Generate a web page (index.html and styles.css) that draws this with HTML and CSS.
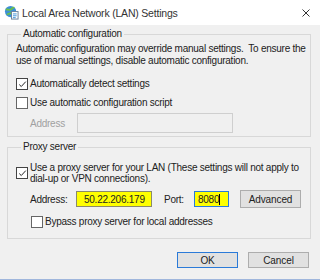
FILE: index.html
```html
<!DOCTYPE html>
<html lang="en">
<head>
    <meta charset="UTF-8">
    <title>Local Area Network (LAN) Settings</title>
    <link rel="stylesheet" href="styles.css">
</head>
<body>
    <div class="dialog">
        <div class="titlebar">
            <svg class="app-icon" viewBox="0 0 16 16" width="15" height="15">
                <circle cx="7" cy="7" r="6" fill="#3c8fd6"/>
                <path d="M2 5c2-1 3 1 5 0s2-3 4-2M3 10c2 0 3-2 5-1s2 2 4 1" stroke="#6cc04a" stroke-width="2" fill="none"/>
                <rect x="8" y="7" width="7" height="8" fill="#fff" stroke="#6a7f99" stroke-width="1"/>
                <path d="M9.5 9.5h4M9.5 11.5h4M9.5 13.5h3" stroke="#3c8fd6" stroke-width="1"/>
            </svg>
            <span class="title">Local Area Network (LAN) Settings</span>
            <svg class="close" viewBox="0 0 8 8" width="8" height="8">
                <path d="M0.5 0.5l7 7M7.5 0.5l-7 7" stroke="#333" stroke-width="1"/>
            </svg>
        </div>

        <div class="content">
            <fieldset class="group">
                <legend>Automatic configuration</legend>
                <p class="desc">Automatic configuration may override manual settings.&nbsp; To ensure the<br>use of manual settings, disable automatic configuration.</p>
                <label class="check first">
                    <span class="box checked">
                        <svg viewBox="0 0 11 11" width="9" height="9"><path d="M1.5 5.5l2.5 2.5 5.5-6" stroke="#222" stroke-width="1.2" fill="none"/></svg>
                    </span>
                    Automatically detect settings
                </label>
                <label class="check second">
                    <span class="box"></span>
                    Use automatic configuration script
                </label>
                <div class="field-row disabled">
                    <span class="field-label">Address</span>
                    <span class="input script-address"></span>
                </div>
            </fieldset>

            <fieldset class="group proxy">
                <legend>Proxy server</legend>
                <label class="check multi">
                    <span class="box checked">
                        <svg viewBox="0 0 11 11" width="9" height="9"><path d="M1.5 5.5l2.5 2.5 5.5-6" stroke="#222" stroke-width="1.2" fill="none"/></svg>
                    </span>
                    <span class="multi-text">Use a proxy server for your LAN (These settings will not apply to<br>dial-up or VPN connections).</span>
                </label>
                <div class="field-row proxy-row">
                    <span class="field-label">Address:</span>
                    <span class="input highlight proxy-address">50.22.206.179</span>
                    <span class="port-label">Port:</span>
                    <span class="input highlight focused port">8080<span class="caret"></span></span>
                    <button class="btn advanced">Advanced</button>
                </div>
                <label class="check bypass">
                    <span class="box"></span>
                    Bypass proxy server for local addresses
                </label>
            </fieldset>

            <div class="actions">
                <button class="btn default">OK</button>
                <button class="btn">Cancel</button>
            </div>
        </div>
    </div>
</body>
</html>
```

FILE: styles.css
```css
* {
    margin: 0;
    padding: 0;
    box-sizing: border-box;
}

body {
    font-family: 'Liberation Sans', Arial, sans-serif;
    font-size: 10px;
    letter-spacing: -0.25px;
    color: #222;
    background: #f0f0f0;
    width: 320px;
    height: 280px;
    overflow: hidden;
}

.dialog {
    height: 280px;
    display: flex;
    flex-direction: column;
    border-bottom: 1px solid #9fb6dc;
}

.titlebar {
    height: 25px;
    background: #fff;
    display: flex;
    align-items: center;
    padding: 0 10px 0 4px;
}

.app-icon {
    margin-right: 3px;
}

.title {
    flex: 1;
    font-size: 10.5px;
    letter-spacing: -0.2px;
    color: #333;
}

.content {
    flex: 1;
    padding: 3px 10px 0 7px;
}

.group {
    width: 304px;
    border: 1px solid #d8d8d8;
    padding: 0 2px 3px 8px;
}

.group legend {
    margin-left: 5px;
    padding: 0 2px;
    line-height: 12px;
}

.desc {
    line-height: 12px;
    margin-top: 3px;
    white-space: nowrap;
}

.check {
    display: flex;
    align-items: center;
    line-height: 12px;
}

.check.first {
    margin-top: 11px;
}

.check.second {
    margin-top: 7px;
}

.box {
    width: 12px;
    height: 12px;
    margin-right: 2px;
    border: 1px solid #444;
    background: #fff;
    display: flex;
    align-items: center;
    justify-content: center;
    flex-shrink: 0;
}

.box:not(.checked) {
    border-color: #666;
}

.field-row {
    display: flex;
    align-items: center;
}

.disabled {
    margin-top: 4px;
    padding-left: 14px;
    color: #a0a0a0;
}

.disabled .field-label {
    width: 47px;
}

.input {
    height: 20px;
    border: 1px solid #cfcfcf;
    background: #f0f0f0;
    display: flex;
    align-items: center;
}

.script-address {
    width: 156px;
}

.proxy {
    margin-top: 4px;
}

.proxy .check.multi {
    margin-top: 9px;
    align-items: flex-start;
}

.check.multi .box {
    margin-top: 5px;
}

.multi-text {
    line-height: 11px;
    white-space: nowrap;
}

.proxy-row {
    margin-top: 6px;
    padding-left: 14px;
}

.proxy-row .field-label {
    width: 46px;
}

.highlight {
    height: 16px;
    background: #ffff00;
    border: 1px solid #8a8a6a;
    padding-left: 7px;
}

.proxy-address {
    width: 76px;
}

.port-label {
    margin-left: 12px;
    width: 30px;
}

.port {
    width: 35px;
    padding-left: 3px;
}

.focused {
    border-color: #2a7ad8;
}

.caret {
    width: 1px;
    height: 11px;
    background: #000;
}

.btn {
    font-family: inherit;
    font-size: 10px;
    letter-spacing: -0.1px;
    color: #222;
    height: 18px;
    width: 61px;
    background: #e1e1e1;
    border: 1px solid #adadad;
}

.advanced {
    margin-left: 11px;
}

.check.bypass {
    margin-top: 8px;
    padding-left: 15px;
    margin-bottom: 7px;
}

.actions {
    display: flex;
    justify-content: flex-end;
    gap: 10px;
    margin-top: 13px;
    padding-right: 1px;
}

.actions .btn {
    height: 16px;
}

.default {
    border-color: #2a7ad8;
}
```
